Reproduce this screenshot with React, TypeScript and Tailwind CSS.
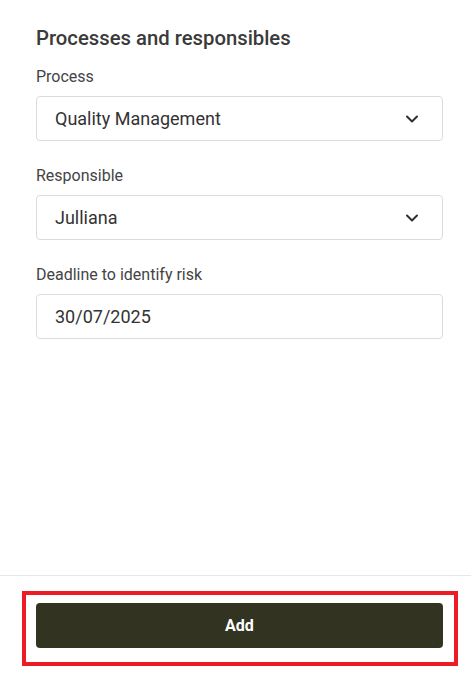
import React from "react";

function Chevron() {
  return (
    <svg width="14" height="14" viewBox="0 0 14 14" fill="none" aria-hidden="true">
      <polyline
        points="2,4.5 7,9.5 12,4.5"
        stroke="#2f2f2f"
        strokeWidth="2"
        strokeLinecap="round"
        strokeLinejoin="round"
      />
    </svg>
  );
}

function Field({ label, value, select }: { label: string; value: string; select?: boolean }) {
  return (
    <div className="flex flex-col">
      <label className="text-[16px] leading-[20px] text-[#444444] mb-[9px]">{label}</label>
      <div className="h-[45px] flex items-center justify-between rounded-[4px] border border-[#dcdcdc] bg-white pl-[18px] pr-[23px]">
        <span className="text-[18px] text-[#333333]">{value}</span>
        {select && <Chevron />}
      </div>
    </div>
  );
}

export default function App() {
  return (
    <div
      className="h-[681px] w-full flex flex-col bg-white"
      style={{ fontFamily: "Roboto, 'Liberation Sans', sans-serif" }}
    >
      {/* Form */}
      <div className="flex-1 pl-9 pr-7 pt-[25px]">
        <h2 className="text-[20.3px] leading-[26px] font-medium text-[#3a3a3a] mb-[16px]">
          Processes and responsibles
        </h2>
        <div className="flex flex-col gap-[25px]">
          <Field label="Process" value="Quality Management" select />
          <Field label="Responsible" value="Julliana" select />
          <Field label="Deadline to identify risk" value="30/07/2025" />
        </div>
      </div>

      {/* Footer */}
      <div className="relative border-t border-[#e8e8e8] pl-9 pr-7 pt-[27px] pb-[33px]">
        <button className="w-full h-[45px] rounded-[4px] bg-[#333322] text-white text-[16px] font-bold">
          Add
        </button>
        <div className="absolute left-[22px] top-[15px] w-[436px] h-[75px] border-4 border-[#ed1c24] pointer-events-none" />
      </div>
    </div>
  );
}
